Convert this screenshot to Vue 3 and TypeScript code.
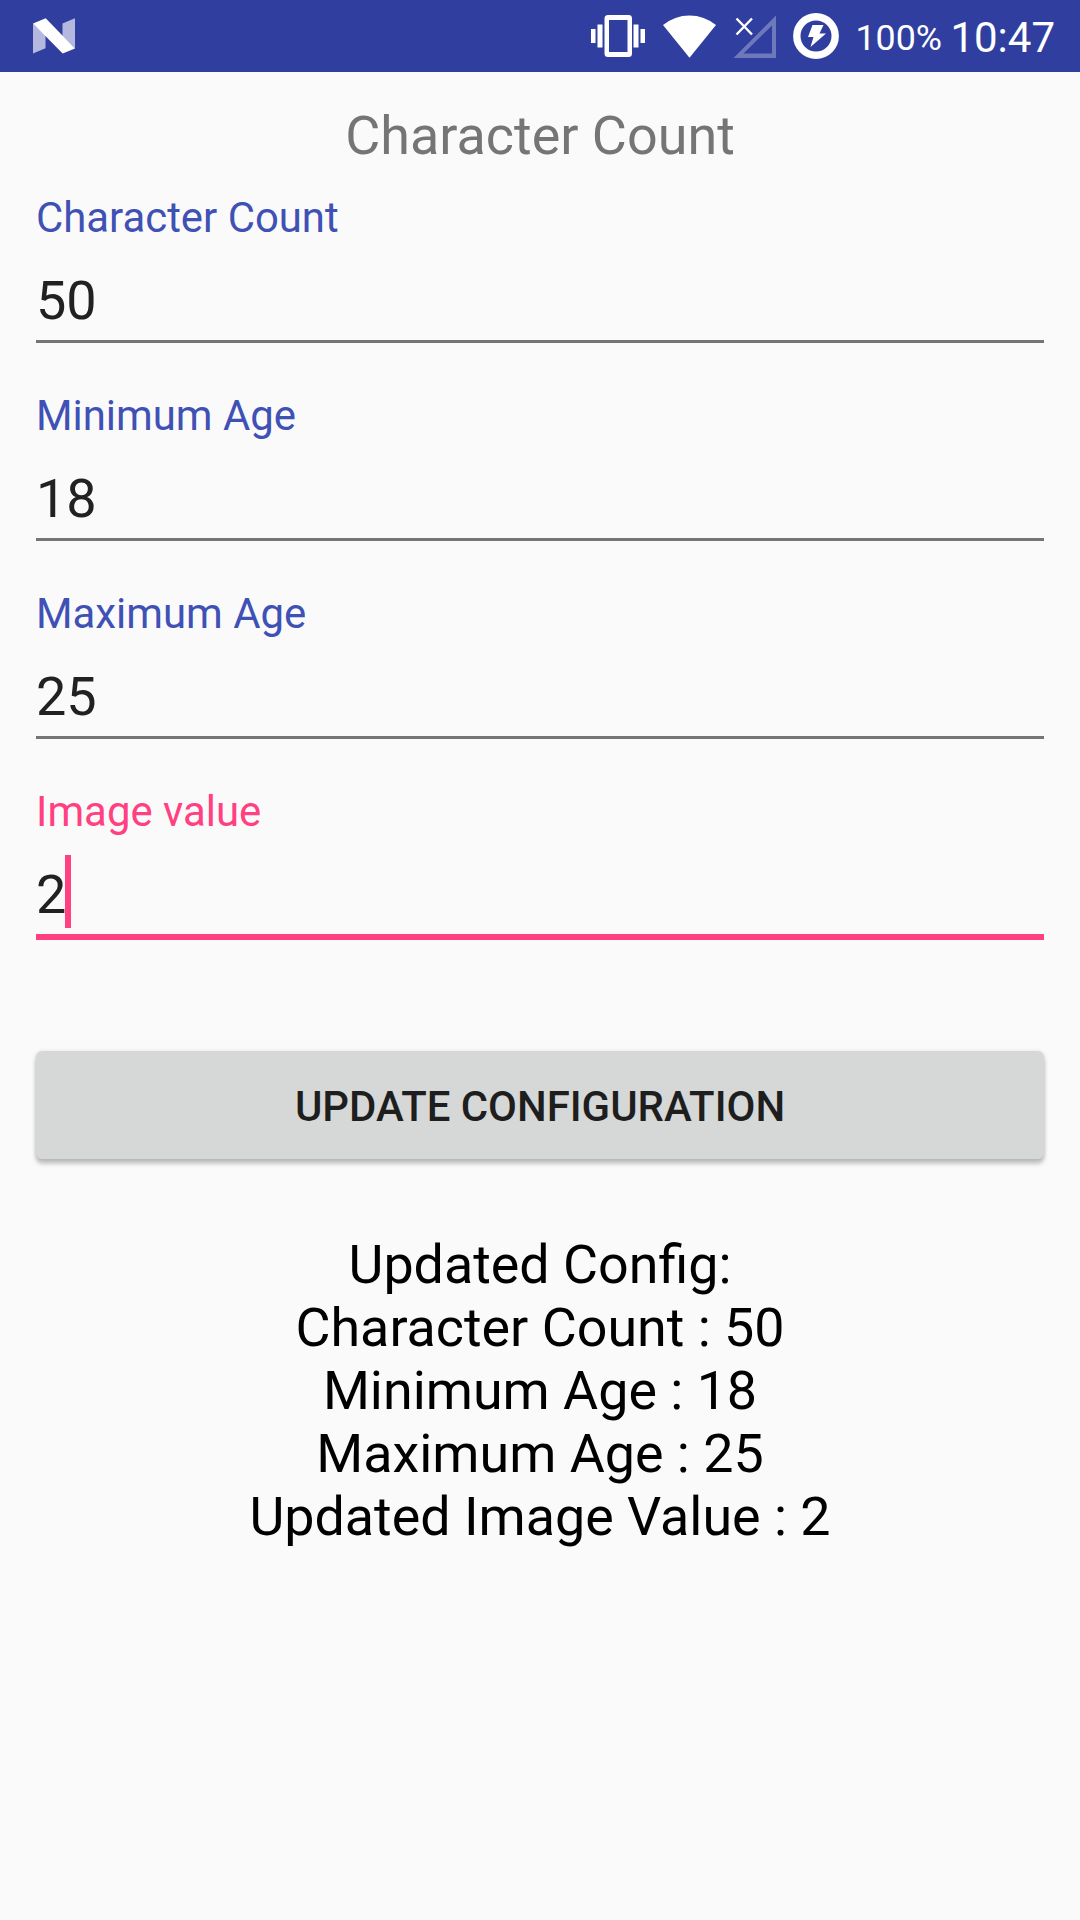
<script setup lang="ts">
interface Field {
  label: string
  value: string
  focused?: boolean
}

const fields: Field[] = [
  { label: 'Character Count', value: '50' },
  { label: 'Minimum Age', value: '18' },
  { label: 'Maximum Age', value: '25' },
  { label: 'Image value', value: '2', focused: true },
]

const results: string[] = [
  'Updated Config:',
  'Character Count : 50',
  'Minimum Age : 18',
  'Maximum Age : 25',
  'Updated Image Value : 2',
]
</script>

<template>
  <div class="screen">
    <header class="status">
      <svg class="nougat" width="42" height="36" viewBox="33 18 42 36">
        <path d="M33 23.500 45.500 35V48.300L33 53.500Z M62.500 23.500 75 18.300V48.500L62.500 36Z" fill="#b5b8de" />
        <path d="M33 23.500 45.700 18.200 75 48.500 62.700 53.600Z" fill="#fff" />
      </svg>
      <span class="spacer"></span>
      <svg class="vibrate" width="54" height="42" viewBox="591 15 54 42" fill="#fff">
        <path d="M591 29h4.500v14H591zM597.500 24.500h5v23h-5zM633.500 24.500h5v23h-5zM640.500 29h4.500v14h-4.500z" />
        <path fill-rule="evenodd" d="M608 15h20.500a3.500 3.500 0 0 1 3.500 3.500v35a3.500 3.500 0 0 1-3.500 3.500H608a3.500 3.500 0 0 1-3.500-3.500v-35A3.500 3.500 0 0 1 608 15zM609 20v32h18.500V20z" />
      </svg>
      <svg class="wifi" width="53" height="43" viewBox="663 14 53 43">
        <path d="M663 24A41.500 41.500 0 0 1 716 24L689.500 56.700Z" fill="#fff" />
      </svg>
      <svg class="signal" width="43" height="43" viewBox="733 14 43 43">
        <path fill-rule="evenodd" fill="#fff" fill-opacity=".3" d="M776 14.500V57H733.500ZM772 24.500 743.500 52.500H772Z" />
        <path d="M736.500 17.500 752 33.500M752 17.500 736.500 33.500" stroke="#fff" stroke-width="2.400" />
      </svg>
      <svg class="battery" width="46" height="46" viewBox="793 13 46 46">
        <circle cx="816" cy="36" r="19.200" fill="none" stroke="#fff" stroke-width="7.400" />
        <path d="M812.500 25H823.500L819.500 33.500H826L810.500 47 813.500 37H808Z" fill="#fff" />
      </svg>
      <span class="percent">100%</span>
      <span class="clock">10:47</span>
    </header>

    <main>
      <h1>Character Count</h1>
      <div v-for="f in fields" :key="f.label" class="field" :class="{ focused: f.focused }">
        <label>{{ f.label }}</label>
        <div class="value">{{ f.value }}<i v-if="f.focused" class="caret"></i></div>
      </div>
      <button type="button">UPDATE CONFIGURATION</button>
      <div class="results">
        <p v-for="line in results" :key="line">{{ line }}</p>
      </div>
    </main>
  </div>
</template>

<style>
body {
  background: #fafafa;
}
</style>

<style scoped>
.screen {
  height: 1920px;
  background: #fafafa;
  font-family: Roboto, sans-serif;
  overflow: hidden;
}
.status {
  display: flex;
  align-items: center;
  box-sizing: border-box;
  height: 72px;
  padding: 0 25px 0 33px;
  background: #303f9f;
  color: #fff;
}
.status svg {
  flex: none;
}
.spacer {
  flex: 1;
}
.wifi {
  margin-left: 18px;
}
.signal {
  margin-left: 17px;
}
.battery {
  margin-left: 17px;
}
.percent {
  width: 87px;
  margin-left: 16px;
  padding-top: 4px;
  font-size: 35.8px;
  line-height: 42px;
}
.clock {
  margin-left: 8px;
  padding-top: 2px;
  font-size: 42px;
  line-height: 49px;
}
main {
  padding: 32px 36px 0;
}
h1 {
  margin: 0 0 26px;
  font-size: 53.9px;
  line-height: 63px;
  font-weight: 400;
  text-align: center;
  color: #757575;
}
.field {
  height: 198px;
}
.field label {
  display: block;
  margin-bottom: 27px;
  font-size: 41.88px;
  line-height: 49px;
  color: #3f51b5;
}
.value {
  position: relative;
  height: 63px;
  padding-bottom: 8px;
  border-bottom: 3px solid #757575;
  font-size: 54px;
  line-height: 63px;
  color: #212121;
}
.focused label {
  color: #ff4081;
}
.focused .value {
  border-bottom: 6px solid #ff4081;
}
.caret {
  position: absolute;
  left: 29px;
  top: -8px;
  width: 6px;
  height: 73px;
  background: #ff4081;
}
button {
  display: block;
  box-sizing: border-box;
  width: 1008px;
  height: 108px;
  margin: 66px 0 74px;
  padding: 3px 0 0;
  border: 0;
  border-radius: 6px;
  background: #d6d8d7;
  box-shadow: 0 5px 4px rgba(0, 0, 0, .2), 0 1px 5px rgba(0, 0, 0, .14);
  font: 500 41.9px/49px Roboto, sans-serif;
  color: #1e1e1e;
}
.results {
  font-size: 53.8px;
  line-height: 63px;
  text-align: center;
  color: #000;
}
.results p {
  margin: 0;
}
</style>
